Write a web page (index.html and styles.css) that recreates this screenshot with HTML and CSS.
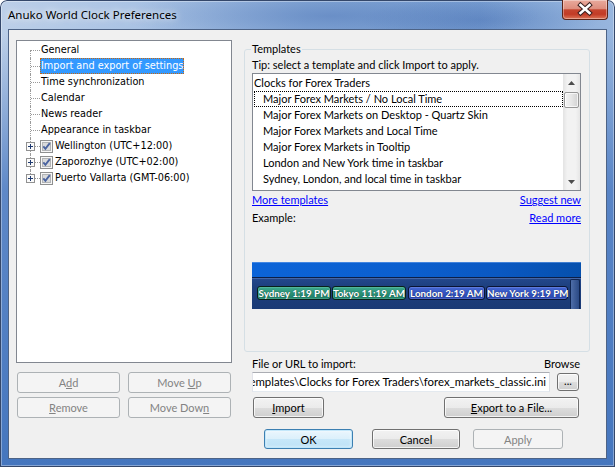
FILE: index.html
```html
<!DOCTYPE html>
<html>
<head>
<meta charset="utf-8">
<title>Anuko World Clock Preferences</title>
<link rel="stylesheet" href="styles.css">
</head>
<body>
<div class="window">
  <div class="titlebar">
    <div class="title">Anuko World Clock Preferences</div>
    <div class="close">
      <svg width="44" height="19" viewBox="0 0 44 19">
        <path d="M17.5 5 L26.5 13 M26.5 5 L17.5 13" stroke="#3a2020" stroke-width="4.6" stroke-linecap="square" fill="none"/>
        <path d="M17.5 5 L26.5 13 M26.5 5 L17.5 13" stroke="#ffffff" stroke-width="2.6" stroke-linecap="square" fill="none"/>
      </svg>
    </div>
  </div>
  <div class="client">
    <div class="left">
      <div class="tree">
        <div class="row first"><span class="conn"></span><span class="lbl">General</span></div>
        <div class="row"><span class="conn"></span><span class="lbl sel">Import and export of settings</span></div>
        <div class="row"><span class="conn"></span><span class="lbl">Time synchronization</span></div>
        <div class="row"><span class="conn"></span><span class="lbl">Calendar</span></div>
        <div class="row"><span class="conn"></span><span class="lbl">News reader</span></div>
        <div class="row"><span class="conn"></span><span class="lbl">Appearance in taskbar</span></div>
        <div class="row"><span class="conn"><svg class="plus" width="9" height="9" viewBox="0 0 9 9"><rect x="0.5" y="0.5" width="8" height="8" fill="#fbfbfb" stroke="#919191"/><path d="M2 4.5 H7 M4.5 2 V7" stroke="#1f3a70" stroke-width="1"/></svg></span><svg class="chk" width="13" height="13" viewBox="0 0 13 13"><rect x="0.5" y="0.5" width="12" height="12" fill="#f6f6f6" stroke="#8e8f8f"/><rect x="2.5" y="2.5" width="8" height="8" fill="#d9dadb" stroke="#b2b4b6"/><path d="M3.3 6.4 L5.4 8.8 L9.8 3.2" stroke="#4b64a0" stroke-width="1.9" fill="none"/></svg><span class="lbl">Wellington (UTC+12:00)</span></div>
        <div class="row"><span class="conn"><svg class="plus" width="9" height="9" viewBox="0 0 9 9"><rect x="0.5" y="0.5" width="8" height="8" fill="#fbfbfb" stroke="#919191"/><path d="M2 4.5 H7 M4.5 2 V7" stroke="#1f3a70" stroke-width="1"/></svg></span><svg class="chk" width="13" height="13" viewBox="0 0 13 13"><rect x="0.5" y="0.5" width="12" height="12" fill="#f6f6f6" stroke="#8e8f8f"/><rect x="2.5" y="2.5" width="8" height="8" fill="#d9dadb" stroke="#b2b4b6"/><path d="M3.3 6.4 L5.4 8.8 L9.8 3.2" stroke="#4b64a0" stroke-width="1.9" fill="none"/></svg><span class="lbl">Zaporozhye (UTC+02:00)</span></div>
        <div class="row last"><span class="conn"><svg class="plus" width="9" height="9" viewBox="0 0 9 9"><rect x="0.5" y="0.5" width="8" height="8" fill="#fbfbfb" stroke="#919191"/><path d="M2 4.5 H7 M4.5 2 V7" stroke="#1f3a70" stroke-width="1"/></svg></span><svg class="chk" width="13" height="13" viewBox="0 0 13 13"><rect x="0.5" y="0.5" width="12" height="12" fill="#f6f6f6" stroke="#8e8f8f"/><rect x="2.5" y="2.5" width="8" height="8" fill="#d9dadb" stroke="#b2b4b6"/><path d="M3.3 6.4 L5.4 8.8 L9.8 3.2" stroke="#4b64a0" stroke-width="1.9" fill="none"/></svg><span class="lbl">Puerto Vallarta (GMT-06:00)</span></div>
      </div>
      <div class="btngrid">
        <button class="btn dis"><span>A<u>d</u>d</span></button>
        <button class="btn dis"><span>Move <u>U</u>p</span></button>
        <button class="btn dis"><span><u>R</u>emove</span></button>
        <button class="btn dis"><span>Move Dow<u>n</u></span></button>
      </div>
    </div>
    <div class="right">
      <fieldset class="group">
        <legend>Templates</legend>
        <div class="tip">Tip: select a template and click Import to apply.</div>
        <div class="list">
          <div class="items">
            <div class="it hdr">Clocks for Forex Traders</div>
            <div class="it focus">Major Forex Markets / No Local Time</div>
            <div class="it">Major Forex Markets on Desktop - Quartz Skin</div>
            <div class="it">Major Forex Markets and Local Time</div>
            <div class="it">Major Forex Markets in Tooltip</div>
            <div class="it">London and New York time in taskbar</div>
            <div class="it">Sydney, London, and local time in taskbar</div>
          </div>
          <div class="sb">
            <div class="sbarrow"><svg width="7" height="4" viewBox="0 0 7 4"><polygon points="3.5,0 7,4 0,4" fill="#4d4d4d"/></svg></div>
            <div class="thumb"></div>
            <div class="sbspace"></div>
            <div class="sbarrow"><svg width="7" height="4" viewBox="0 0 7 4"><polygon points="0,0 7,0 3.5,4" fill="#4d4d4d"/></svg></div>
          </div>
        </div>
        <div class="links"><a href="#">More templates</a><a href="#">Suggest new</a></div>
        <div class="example"><span>Example:</span><a href="#">Read more</a></div>
        <div class="taskbar">
          <div class="tb-top"></div>
          <div class="tb-bot">
            <span class="pill green w74">Sydney 1:19 PM</span>
            <span class="pill green w74">Tokyo 11:19 AM</span>
            <span class="pill blue w77">London 2:19 AM</span>
            <span class="pill blue w82">New York 9:19 PM</span>
            <span class="tb-grip"></span>
          </div>
        </div>
      </fieldset>
      <div class="below">
        <div class="filelbl"><span>File or URL to import:</span><span>Browse</span></div>
        <div class="filerow">
          <div class="input"><span class="path">C:\Program Files\Anuko World Clock\Templates\Clocks for Forex Traders\forex_markets_classic.ini</span></div>
          <button class="btn dots"><span>...</span></button>
        </div>
        <div class="actrow">
          <button class="btn import"><span><u>I</u>mport</span></button>
          <button class="btn export"><span><u>E</u>xport to a File...</span></button>
        </div>
        <div class="okrow">
          <button class="btn def ok"><span>OK</span></button>
          <button class="btn cancel"><span>Cancel</span></button>
          <button class="btn dis apply"><span>Apply</span></button>
        </div>
      </div>
    </div>
  </div>
</div>
</body>
</html>
```
FILE: styles.css
```css
* { box-sizing: border-box; }
body {
  margin: 0;
  width: 615px;
  height: 467px;
  overflow: hidden;
  font-family: Lato, "Liberation Sans", sans-serif;
  font-size: 11px;
  color: #000;
}
.window {
  width: 615px;
  height: 467px;
  display: flex;
  flex-direction: column;
  border-radius: 7px 7px 0 0;
  overflow: hidden;
  background:
    linear-gradient(180deg, rgba(72,118,190,0) 0px, rgba(72,118,190,0) 34px, rgba(78,124,194,0.85) 190px, #4576be 467px),
    radial-gradient(ellipse 210px 28px at 330px 16px, rgba(70,110,178,0.45), rgba(70,110,178,0)),
    radial-gradient(ellipse 120px 22px at 480px 20px, rgba(60,100,170,0.35), rgba(60,100,170,0)),
    linear-gradient(90deg, #bccfe8 0%, #aac3e4 22%, #8aacd9 50%, #7aa0d3 78%, #98b6de 100%);
  box-shadow: inset 0 0 0 1px #34476a, inset 0 0 0 2px rgba(255,255,255,0.35);
}
.titlebar {
  flex: none;
  height: 29px;
  display: flex;
  align-items: flex-start;
}
.title {
  padding: 7px 0 0 8px;
  font-family: "Noto Sans", "Open Sans", sans-serif;
  font-size: 11.5px;
  line-height: 16px;
  color: #000;
  text-shadow: 0 0 6px rgba(255,255,255,0.9), 0 0 12px rgba(255,255,255,0.7);
}
.close {
  margin-left: auto;
  margin-right: 7px;
  width: 46px;
  height: 20px;
  border: 1px solid #5b2419;
  border-top: none;
  border-radius: 0 0 4px 4px;
  background: linear-gradient(180deg, #e9aa9c 0%, #de8e7e 45%, #c5452f 52%, #c23b26 75%, #dc7558 100%);
  box-shadow: inset 0 0 0 1px rgba(255,255,255,0.35);
  display: flex;
  align-items: center;
  justify-content: center;
}
.close svg { display: block; }

.client {
  flex: none;
  margin: 0 8px;
  height: 430px;
  border: 1px solid #4d6386;
  background: #f0f0f0;
  display: flex;
}

/* left side */
.left {
  margin: 10px 0 0 7px;
  width: 216px;
  flex: none;
  display: flex;
  flex-direction: column;
}
.tree {
  height: 323px;
  border: 1px solid #828790;
  background: #fff;
  padding-top: 1px;
  font-family: "DejaVu Sans Condensed", "DejaVu Sans", sans-serif;
  font-stretch: condensed;
  font-size: 10.8px;
}
.row {
  height: 16px;
  display: flex;
  align-items: center;
  white-space: nowrap;
}
.conn {
  flex: none;
  width: 23px;
  align-self: stretch;
  position: relative;
}
.conn::before {
  content: "";
  position: absolute;
  left: 13px;
  top: 0;
  bottom: 0;
  border-left: 1px dotted #9a9a9a;
}
.row.first .conn::before { top: 8px; }
.row.last .conn::before { bottom: 8px; }
.conn::after {
  content: "";
  position: absolute;
  left: 14px;
  top: 8px;
  width: 9px;
  border-top: 1px dotted #9a9a9a;
}
.plus {
  position: absolute;
  left: 9px;
  top: 4px;
  z-index: 1;
  display: block;
}
.chk {
  flex: none;
  display: block;
  margin-right: 1px;
}
.lbl {
  padding: 0 1px;
  line-height: 16px;
  height: 16px;
}
.lbl.sel {
  background: #3399ff;
  color: #fff;
  outline: 1px dotted #c8670e;
  outline-offset: -1px;
}
.btngrid {
  display: grid;
  grid-template-columns: 103px 103px;
  grid-auto-rows: 21px;
  column-gap: 8px;
  row-gap: 4px;
  margin: 9px 0 0 1px;
}

/* buttons */
.btn {
  font-family: inherit;
  font-size: 11px;
  color: #000;
  padding: 0;
  margin: 0;
  display: flex;
  align-items: center;
  justify-content: center;
  white-space: nowrap;
  border: 1px solid #707070;
  border-radius: 3px;
  background: linear-gradient(180deg, #f2f2f2 0%, #ebebeb 50%, #dddddd 50%, #cfcfcf 100%);
  box-shadow: inset 0 0 0 1px rgba(255,255,255,0.75);
}
.btn u { text-underline-offset: 1px; }
.btn.dis {
  border-color: #adb2b5;
  background: #f4f4f4;
  box-shadow: none;
  color: #838383;
}
.btn.def {
  border-color: #3c7fb1;
  background: linear-gradient(180deg, #eaf6fd 0%, #dcf0fb 50%, #c7e7f9 50%, #bde2f6 100%);
  box-shadow: inset 0 0 0 1px rgba(190,228,250,0.9), inset 0 0 3px 1px rgba(255,255,255,0.6);
}

/* right side */
.right {
  margin: 12px 0 0 12px;
  width: 346px;
  flex: none;
  display: flex;
  flex-direction: column;
}
.group {
  margin: 0;
  padding: 0 8px 0 7px;
  border: 1px solid #d5dfe5;
  border-radius: 3px;
  height: 310px;
  min-width: 0;
}
.group legend {
  padding: 0 1px;
  margin-left: -1px;
  line-height: 14px;
}
.tip {
  margin-top: 2px;
  line-height: 14px;
  white-space: nowrap;
}
.list {
  margin-top: 1px;
  height: 118px;
  border: 1px solid #828790;
  background: #fff;
  display: flex;
}
.items {
  flex: 1;
  min-width: 0;
  padding-top: 1px;
}
.it {
  height: 16px;
  line-height: 16px;
  padding-left: 10px;
  white-space: nowrap;
}
.it.hdr { padding-left: 1px; }
.it.focus {
  margin-left: 1px;
  padding-left: 9px;
  outline: 1px dotted #000;
  outline-offset: -1px;
}
.sb {
  flex: none;
  width: 17px;
  display: flex;
  flex-direction: column;
  background: linear-gradient(90deg, #e3e3e3 0%, #f2f2f2 25%, #f2f2f2 75%, #e6e6e6 100%);
}
.sbarrow {
  height: 17px;
  flex: none;
  display: flex;
  align-items: center;
  justify-content: center;
}
.sbarrow svg { display: block; }
.thumb {
  flex: none;
  height: 16px;
  margin: 1px 1px 0;
  border: 1px solid #979797;
  border-radius: 2px;
  background: linear-gradient(90deg, #f4f4f4 0%, #e6e6e6 50%, #d2d2d2 100%);
  box-shadow: inset 0 0 0 1px rgba(255,255,255,0.7);
}
.sbspace { flex: 1; }
a {
  color: #0000ff;
  text-decoration: underline;
}
.links, .example {
  display: flex;
  justify-content: space-between;
  line-height: 14px;
}
.links { margin-top: 2px; }
.example { margin-top: 4px; }
.taskbar {
  margin-top: 37px;
  height: 47px;
  display: flex;
  flex-direction: column;
}
.tb-top {
  height: 15px;
  flex: none;
  background: linear-gradient(90deg, #0c64d8 0%, #0b5fcf 45%, #0a58c2 75%, #0650ad 100%);
  box-shadow: inset 0 1px 0 rgba(120,170,240,0.5);
}
.tb-bot {
  flex: 1;
  border-top: 1px solid #0c1f47;
  background: linear-gradient(180deg, #23488c 0%, #1d3f7e 30%, #1a3a75 100%);
  box-shadow: inset 0 1px 0 rgba(110,140,200,0.45);
  display: flex;
  align-items: flex-start;
  padding: 8px 0 0 5px;
}
.pill {
  flex: none;
  height: 14px;
  margin-right: 1px;
  border: 1px solid #08201a;
  border-radius: 3px;
  color: #fff;
  font-weight: 700;
  font-size: 9.8px;
  line-height: 12px;
  text-align: center;
  white-space: nowrap;
  text-shadow: 0 0 1px rgba(0,0,0,0.6);
}
.pill.green {
  background: linear-gradient(180deg, #3eaa8e 0%, #2a9177 50%, #1f7e66 100%);
  box-shadow: inset 0 0 0 1px rgba(120,210,180,0.35);
}
.pill.blue {
  border-color: #0a1433;
  background: linear-gradient(180deg, #4668d4 0%, #3454c0 50%, #2a47ad 100%);
  box-shadow: inset 0 0 0 1px rgba(140,160,240,0.35);
}
.w74 { width: 74px; }
.w77 { width: 77px; margin-left: 1px; }
.w82 { width: 82px; }
.tb-grip {
  flex: none;
  width: 10px;
  align-self: stretch;
  margin: -7px 0 0 1px;
  border: 1px solid #0e2450;
  border-bottom: none;
  border-radius: 2px 2px 0 0;
  background: linear-gradient(90deg, #4f6ea8 0%, #3c5b96 50%, #2b4a85 100%);
}

.below {
  padding: 0 9px 0 8px;
}
.filelbl {
  margin-top: 5px;
  display: flex;
  justify-content: space-between;
  line-height: 14px;
  padding-right: 1px;
}
.filerow {
  margin-top: 1px;
  height: 20px;
  display: flex;
  align-items: center;
}
.input {
  flex: none;
  width: 298px;
  height: 20px;
  border: 1px solid;
  border-color: #abadb3 #dbdfe6 #e3e9ef #e2e3ea;
  background: #fff;
  display: flex;
  justify-content: flex-end;
  overflow: hidden;
  padding-right: 3px;
  font-size: 11.4px;
  line-height: 18px;
  white-space: nowrap;
}
.path { flex: none; }
.dots {
  margin-left: auto;
  margin-right: 2px;
  width: 22px;
  height: 18px;
  line-height: 14px;
  align-items: flex-end;
  padding-bottom: 2px;
}
.actrow {
  margin-top: 5px;
  height: 21px;
  display: flex;
}
.import { margin-left: 1px; width: 71px; }
.export { margin-left: auto; margin-right: 2px; width: 135px; }
.okrow {
  margin-top: 11px;
  height: 20px;
  display: flex;
  padding-left: 12px;
}
.ok { width: 89px; }
.cancel { width: 88px; margin-left: 19px; }
.apply { width: 90px; margin-left: 13px; }
```
